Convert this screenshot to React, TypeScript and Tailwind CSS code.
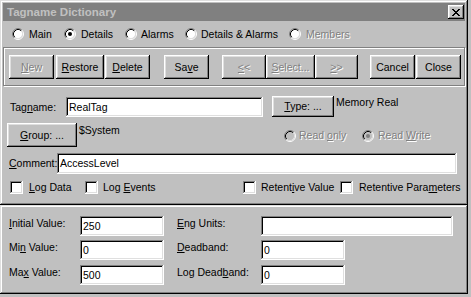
import React from "react";

const RAISED =
  "shadow-[inset_-1px_-1px_#000,inset_1px_1px_#fff,inset_-2px_-2px_#808080,inset_2px_2px_#dfdfdf]";
const WINDOW =
  "shadow-[inset_-1px_-1px_#000,inset_1px_1px_#dfdfdf,inset_-2px_-2px_#808080,inset_2px_2px_#fff]";
const FIELD =
  "shadow-[inset_-1px_-1px_#fff,inset_1px_1px_#808080,inset_-2px_-2px_#dfdfdf,inset_2px_2px_#000]";

function U({ children }: { children: React.ReactNode }) {
  return <span className="underline underline-offset-[1px] decoration-1">{children}</span>;
}

function Radio({ checked, disabled }: { checked?: boolean; disabled?: boolean }) {
  return (
    <svg width="12" height="12" viewBox="0 0 12 12" className="shrink-0 block">
      <circle cx="6" cy="6" r="4.5" fill={disabled ? "#c0c0c0" : "#fff"} />
      <path d="M2.11 9.89 A5.5 5.5 0 0 1 9.89 2.11" stroke="#808080" fill="none" />
      <path d="M9.89 2.11 A5.5 5.5 0 0 1 2.11 9.89" stroke="#fff" fill="none" />
      <path d="M2.82 9.18 A4.5 4.5 0 0 1 9.18 2.82" stroke="#000" fill="none" />
      <path d="M9.18 2.82 A4.5 4.5 0 0 1 2.82 9.18" stroke="#dfdfdf" fill="none" />
      {checked && <circle cx="6" cy="6" r="2" fill={disabled ? "#808080" : "#000"} />}
    </svg>
  );
}

function Check() {
  return <div className={`w-[13px] h-[13px] bg-white shrink-0 ${FIELD}`} />;
}

function Btn({
  w,
  ml,
  disabled,
  children,
}: {
  w: string;
  ml: string;
  disabled?: boolean;
  children: React.ReactNode;
}) {
  return (
    <div
      className={`${w} ${ml} h-[24px] shrink-0 flex items-center justify-center bg-[#c0c0c0] ${RAISED} ${
        disabled ? "text-[#808080] [text-shadow:1px_1px_0_#fff]" : ""
      }`}
    >
      <span>{children}</span>
    </div>
  );
}

function Field({ w, h, children }: { w: string; h: string; children?: React.ReactNode }) {
  return (
    <div className={`${w} ${h} shrink-0 bg-white flex items-center pl-[3px] ${FIELD}`}>
      <span>{children}</span>
    </div>
  );
}

function CloseGlyph() {
  const px: [number, number][] = [
    [0, 0], [1, 0], [6, 0], [7, 0],
    [1, 1], [2, 1], [5, 1], [6, 1],
    [2, 2], [3, 2], [4, 2], [5, 2],
    [3, 3], [4, 3],
    [2, 4], [3, 4], [4, 4], [5, 4],
    [1, 5], [2, 5], [5, 5], [6, 5],
    [0, 6], [1, 6], [6, 6], [7, 6],
  ];
  return (
    <svg width="8" height="7" viewBox="0 0 8 7" shapeRendering="crispEdges" className="block">
      {px.map(([x, y], i) => (
        <rect key={i} x={x} y={y} width="1" height="1" fill="#000" />
      ))}
    </svg>
  );
}

function LowerRow({
  mt,
  l1,
  v1,
  l2,
  v2,
  w2,
}: {
  mt: string;
  l1: React.ReactNode;
  v1: string;
  l2: React.ReactNode;
  v2: string;
  w2: string;
}) {
  return (
    <div className={`flex items-start h-[20px] ${mt}`}>
      <div className="ml-[7px] w-[71px] shrink-0 mt-[1px]">{l1}</div>
      <Field w="w-[84px]" h="h-[20px]">{v1}</Field>
      <div className="ml-[13px] w-[84px] shrink-0 mt-[1px] whitespace-nowrap">{l2}</div>
      <Field w={w2} h="h-[20px]">{v2}</Field>
    </div>
  );
}

export default function App() {
  return (
    <div className="w-[471px] h-[297px] bg-[#c0c0c0] overflow-hidden font-['Liberation_Sans',Arial,sans-serif] text-[10.5px] leading-[13px] text-black whitespace-nowrap">
      <div className="flex flex-col w-[468px]">
        {/* Upper dialog */}
        <div className={`h-[205px] flex flex-col p-[3px] bg-[#c0c0c0] ${WINDOW}`}>
          {/* Title bar */}
          <div className="h-[18px] shrink-0 bg-[#808080] flex items-center pl-[4px] pr-[1px]">
            <span className="font-bold text-[11.5px] leading-[14px] text-[#c0c0c0]">Tagname Dictionary</span>
            <div className={`ml-auto w-[16px] h-[14px] bg-[#c0c0c0] flex items-center justify-center ${RAISED}`}>
              <CloseGlyph />
            </div>
          </div>

          {/* Radio tabs */}
          <div className="mt-[7px] h-[12px] flex items-center">
            <div className="ml-[9px] w-[52px] flex items-center shrink-0">
              <Radio />
              <span className="ml-[5px]">Main</span>
            </div>
            <div className="w-[61px] flex items-center shrink-0">
              <Radio checked />
              <span className="ml-[5px]">Details</span>
            </div>
            <div className="w-[60px] flex items-center shrink-0">
              <Radio />
              <span className="ml-[4px]">Alarms</span>
            </div>
            <div className="w-[104px] flex items-center shrink-0">
              <Radio />
              <span className="ml-[4px]">Details &amp; Alarms</span>
            </div>
            <div className="flex items-center shrink-0">
              <Radio />
              <span className="ml-[5px] text-[#808080] [text-shadow:1px_1px_0_#fff]">Members</span>
            </div>
          </div>

          {/* Button group */}
          <div className="mt-[7px] h-[39px] w-[462px] border border-[#808080] shadow-[1px_1px_0_#fff,inset_1px_1px_0_#fff] flex items-start">
            <div className="mt-[7px] flex">
              <Btn w="w-[45px]" ml="ml-[5px]" disabled>
                <U>N</U>ew
              </Btn>
              <Btn w="w-[48px]" ml="ml-[2px]">
                <U>R</U>estore
              </Btn>
              <Btn w="w-[45px]" ml="ml-[1px]">
                <U>D</U>elete
              </Btn>
              <Btn w="w-[45px]" ml="ml-[14px]">
                Sa<U>v</U>e
              </Btn>
              <Btn w="w-[44px]" ml="ml-[13px]" disabled>
                <U>&lt;</U>&lt;
              </Btn>
              <Btn w="w-[49px]" ml="ml-[0px]" disabled>
                <U>S</U>elect...
              </Btn>
              <Btn w="w-[43px]" ml="ml-[0px]" disabled>
                <U>&gt;</U>&gt;
              </Btn>
              <Btn w="w-[45px]" ml="ml-[12px]">Cancel</Btn>
              <Btn w="w-[45px]" ml="ml-[1px]">Close</Btn>
            </div>
          </div>

          {/* Tagname row */}
          <div className="mt-[10px] h-[21px] flex items-start">
            <div className="ml-[7px] w-[56px] shrink-0 mt-[5px]">
              Tag<U>n</U>ame:
            </div>
            <div className="mt-[1px]">
              <Field w="w-[197px]" h="h-[20px]">RealTag</Field>
            </div>
            <div className={`ml-[9px] w-[62px] h-[21px] shrink-0 flex items-center justify-center ${RAISED}`}>
              <span>
                <U>T</U>ype: ...
              </span>
            </div>
            <div className="ml-[2px] mt-[0px]">Memory Real</div>
          </div>

          {/* Group row */}
          <div className="mt-[6px] h-[24px] flex items-start">
            <div className={`ml-[4px] w-[70px] h-[24px] shrink-0 flex items-center justify-center ${RAISED}`}>
              <span>
                <U>G</U>roup: ...
              </span>
            </div>
            <div className="ml-[2px] w-[205px] shrink-0 mt-[1px]">$System</div>
            <div className="mt-[6px] w-[78px] shrink-0 flex items-center">
              <Radio disabled />
              <span className="ml-[3px] text-[#808080] [text-shadow:1px_1px_0_#fff]">
                Read <U>o</U>nly
              </span>
            </div>
            <div className="mt-[6px] flex items-center">
              <Radio checked disabled />
              <span className="ml-[4px] text-[#808080] [text-shadow:1px_1px_0_#fff]">
                Read <U>W</U>rite
              </span>
            </div>
          </div>

          {/* Comment row */}
          <div className="mt-[6px] h-[21px] flex items-center">
            <div className="ml-[6px] w-[48px] shrink-0">
              <U>C</U>omment:
            </div>
            <Field w="w-[400px]" h="h-[21px]">AccessLevel</Field>
          </div>

          {/* Checkbox row */}
          <div className="mt-[7px] h-[13px] flex items-center">
            <div className="ml-[7px] w-[75px] shrink-0 flex items-center">
              <Check />
              <span className="ml-[6px]">
                <U>L</U>og Data
              </span>
            </div>
            <div className="w-[158px] shrink-0 flex items-center">
              <Check />
              <span className="ml-[5px]">
                Log <U>E</U>vents
              </span>
            </div>
            <div className="w-[97px] shrink-0 flex items-center">
              <Check />
              <span className="ml-[5px]">
                Retent<U>i</U>ve Value
              </span>
            </div>
            <div className="flex items-center shrink-0">
              <Check />
              <span className="ml-[6px]">
                Retentive Para<U>m</U>eters
              </span>
            </div>
          </div>
        </div>

        {/* Lower panel */}
        <div className={`h-[89px] flex flex-col p-[2px] bg-[#c0c0c0] ${WINDOW}`}>
          <LowerRow
            mt="mt-[9px]"
            l1={
              <>
                <U>I</U>nitial Value:
              </>
            }
            v1="250"
            l2={
              <>
                <U>E</U>ng Units:
              </>
            }
            v2=""
            w2="w-[192px]"
          />
          <LowerRow
            mt="mt-[4px]"
            l1={
              <>
                Mi<U>n</U> Value:
              </>
            }
            v1="0"
            l2={
              <>
                <U>D</U>eadband:
              </>
            }
            v2="0"
            w2="w-[84px]"
          />
          <LowerRow
            mt="mt-[5px]"
            l1={
              <>
                Ma<U>x</U> Value:
              </>
            }
            v1="500"
            l2={
              <>
                Log Dead<U>b</U>and:
              </>
            }
            v2="0"
            w2="w-[84px]"
          />
        </div>
      </div>
    </div>
  );
}
